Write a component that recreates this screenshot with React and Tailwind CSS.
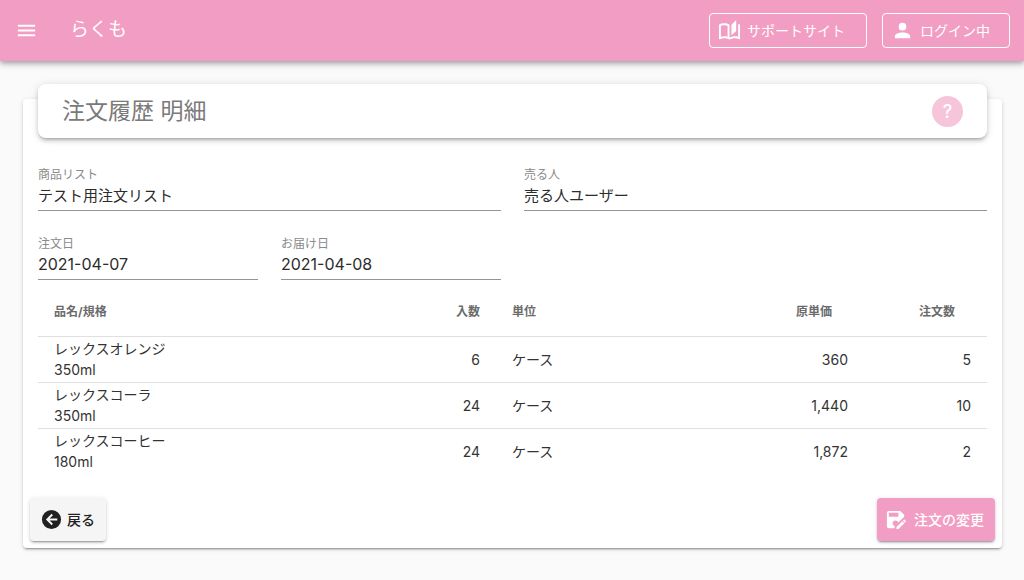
import React, { useState } from "react";

// Icons
const icons = {
  menu: "M3,6H21V8H3V6M3,11H21V13H3V11M3,16H21V18H3V16Z",
  book: "M19 1L14 6V17L19 12.5V1M21 5V18.5C19.9 18.15 18.7 18 17.5 18C15.8 18 13.35 18.65 12 19.5V6C10.55 4.9 8.45 4.5 6.5 4.5C4.55 4.5 2.45 4.9 1 6V20.65C1 20.9 1.25 21.15 1.5 21.15C1.6 21.15 1.65 21.1 1.75 21.1C3.1 20.45 5.05 20 6.5 20C8.45 20 10.55 20.4 12 21.5C13.35 20.65 15.8 20 17.5 20C19.15 20 20.85 20.3 22.25 21.05C22.35 21.1 22.4 21.1 22.5 21.1C22.75 21.1 23 20.85 23 20.6V6C22.4 5.55 21.75 5.25 21 5M10 18.41C8.75 18.09 7.5 18 6.5 18C5.44 18 4.18 18.19 3 18.5V7.13C3.91 6.73 5.14 6.5 6.5 6.5C7.86 6.5 9.09 6.73 10 7.13V18.41Z",
  account: "M12,4A4,4 0 0,1 16,8A4,4 0 0,1 12,12A4,4 0 0,1 8,8A4,4 0 0,1 12,4M12,14C16.42,14 20,15.79 20,18V20H4V18C4,15.79 7.58,14 12,14Z",
  back: "M2,12A10,10 0 0,1 12,2A10,10 0 0,1 22,12A10,10 0 0,1 12,22A10,10 0 0,1 2,12M18,11H10L13.5,7.5L12.08,6.08L6.16,12L12.08,17.92L13.5,16.5L10,13H18V11Z",
  saveEdit: "M10,19L10.14,18.86C8.9,18.5 8,17.36 8,16A3,3 0 0,1 11,13C12.36,13 13.5,13.9 13.86,15.14L20,9V7L16,3H4C2.89,3 2,3.9 2,5V19A2,2 0 0,0 4,21H10V19M4,5H14V9H4V5M20.04,12.13C19.9,12.13 19.76,12.19 19.65,12.3L18.65,13.3L20.7,15.35L21.7,14.35C21.92,14.14 21.92,13.79 21.7,13.58L20.42,12.3C20.31,12.19 20.18,12.13 20.04,12.13M18.07,13.88L12,19.94V22H14.06L20.12,15.93L18.07,13.88Z",
};

const Icon = ({ name }) => (
  <svg viewBox="0 0 24 24" className="size-[23px] shrink-0 fill-current" aria-hidden="true">
    <path d={icons[name]} />
  </svg>
);

const Field = ({ id, label, value, className = "text-[15px]" }) => (
  <div className={`flex min-w-0 flex-col ${className}`}>
    <label htmlFor={id} className="text-[12px] leading-4 text-[#8a8a8a]">
      {label}
    </label>
    <input
      id={id}
      type="text"
      readOnly
      defaultValue={value}
      className="h-7 w-full border-b border-[#949494] pb-1 leading-6 text-[#2c2c2c] outline-none"
    />
  </div>
);

const items = [
  { id: 1, name: "レックスオレンジ", spec: "350ml", pack: 6, unit: "ケース", price: 360, count: 5 },
  { id: 2, name: "レックスコーラ", spec: "350ml", pack: 24, unit: "ケース", price: 1440, count: 10 },
  { id: 3, name: "レックスコーヒー", spec: "180ml", pack: 24, unit: "ケース", price: 1872, count: 2 },
];

const AppBar = () => {
  const [menuOpen, setMenuOpen] = useState(false);

  return (
    <header className="relative flex h-[61px] items-center bg-[#f29dc3] pr-[14px] pl-[15px] text-white shadow-[0_2px_4px_-1px_rgba(0,0,0,0.2),0_4px_5px_0_rgba(0,0,0,0.14),0_1px_10px_0_rgba(0,0,0,0.12)]">
      <button type="button" aria-label="メニュー" aria-expanded={menuOpen} onClick={() => setMenuOpen(!menuOpen)}>
        <Icon name="menu" />
      </button>
      <span className="ml-8 text-[19px]">らくも</span>
      <div className="ml-auto flex gap-[15px] text-[14px]">
        <a href="#support" className="flex h-[35px] w-[158px] items-center gap-[6px] rounded border border-current pl-2">
          <Icon name="book" />
          サポートサイト
        </a>
        <button type="button" className="flex h-[35px] w-[128px] items-center gap-[6px] rounded border border-current pl-2">
          <Icon name="account" />
          ログイン中
        </button>
      </div>
    </header>
  );
};

const OrderTable = () => (
  <table className="w-full table-fixed text-[14px] text-[#333333]">
    <colgroup>
      <col />
      <col className="w-[123px]" />
      <col className="w-[245px]" />
      <col className="w-[123px]" />
      <col className="w-[123px]" />
    </colgroup>
    <thead>
      <tr className="h-12 border-b border-[#e0e0e0] text-[12px] text-[#6b6b6b]">
        <th className="px-4 text-left">品名/規格</th>
        <th className="px-4 text-right">入数</th>
        <th className="px-4 text-left">単位</th>
        <th className="pr-8 text-right">原単価</th>
        <th className="pr-8 text-right">注文数</th>
      </tr>
    </thead>
    <tbody>
      {items.map((item) => (
        <tr key={item.id} className="h-[46px] border-b border-[#e0e0e0] last:border-b-0">
          <td className="px-4 leading-[21px]">
            {item.name}
            <br />
            {item.spec}
          </td>
          <td className="px-4 text-right">{item.pack}</td>
          <td className="px-4">{item.unit}</td>
          <td className="px-4 text-right">{item.price.toLocaleString("en-US")}</td>
          <td className="px-4 text-right">{item.count}</td>
        </tr>
      ))}
    </tbody>
  </table>
);

const App = () => {
  return (
    <div className="min-h-screen bg-[#fafafa] font-[Inter,'Noto_Sans_CJK_JP',sans-serif]">
      <AppBar />

      <main className="pt-[38px] pr-[22px] pb-8 pl-[23px]">
        <section className="rounded bg-white px-[15px] pb-[7px] shadow-[0_3px_1px_-2px_rgba(0,0,0,0.2),0_2px_2px_0_rgba(0,0,0,0.14),0_1px_5px_0_rgba(0,0,0,0.12)]">
          {/* Title */}
          <div className="relative -top-[15px] -mb-[15px] flex h-[54px] items-center justify-between rounded-lg bg-white px-6 shadow-[0_3px_3px_-2px_rgba(0,0,0,0.2),0_3px_4px_0_rgba(0,0,0,0.14),0_1px_8px_0_rgba(0,0,0,0.12)]">
            <h1 className="text-[23px] text-[#7a7a7a]">注文履歴 明細</h1>
            <button type="button" aria-label="ヘルプ" className="size-[31px] rounded-full bg-[#f7c5da] text-[18px] font-medium text-white">
              ?
            </button>
          </div>

          {/* Order info */}
          <div className="mt-[29px] mb-2 grid grid-cols-4 gap-x-[23px] gap-y-[25px]">
            <Field id="list" label="商品リスト" value="テスト用注文リスト" className="col-span-2 text-[15px]" />
            <Field id="seller" label="売る人" value="売る人ユーザー" className="col-span-2 text-[15px]" />
            <Field id="ordered" label="注文日" value="2021-04-07" className="text-[16px]" />
            <Field id="delivery" label="お届け日" value="2021-04-08" className="text-[16px]" />
          </div>

          <OrderTable />

          {/* Actions */}
          <div className="-mx-2 mt-6 flex justify-between text-[14px] font-medium">
            <button
              type="button"
              className="flex h-[43px] w-[76px] items-center gap-1 rounded bg-[#f5f5f5] pl-[10px] text-[#212121] shadow-[0_3px_1px_-2px_rgba(0,0,0,0.2),0_2px_2px_0_rgba(0,0,0,0.14),0_1px_5px_0_rgba(0,0,0,0.12)]"
            >
              <Icon name="back" />
              戻る
            </button>
            <button
              type="button"
              className="flex h-[43px] w-[118px] items-center gap-[6px] rounded bg-[#f29dc3] pl-2 text-white shadow-[0_3px_1px_-2px_rgba(0,0,0,0.2),0_2px_2px_0_rgba(0,0,0,0.14),0_1px_5px_0_rgba(0,0,0,0.12)]"
            >
              <Icon name="saveEdit" />
              注文の変更
            </button>
          </div>
        </section>
      </main>
    </div>
  );
};

export default App;
